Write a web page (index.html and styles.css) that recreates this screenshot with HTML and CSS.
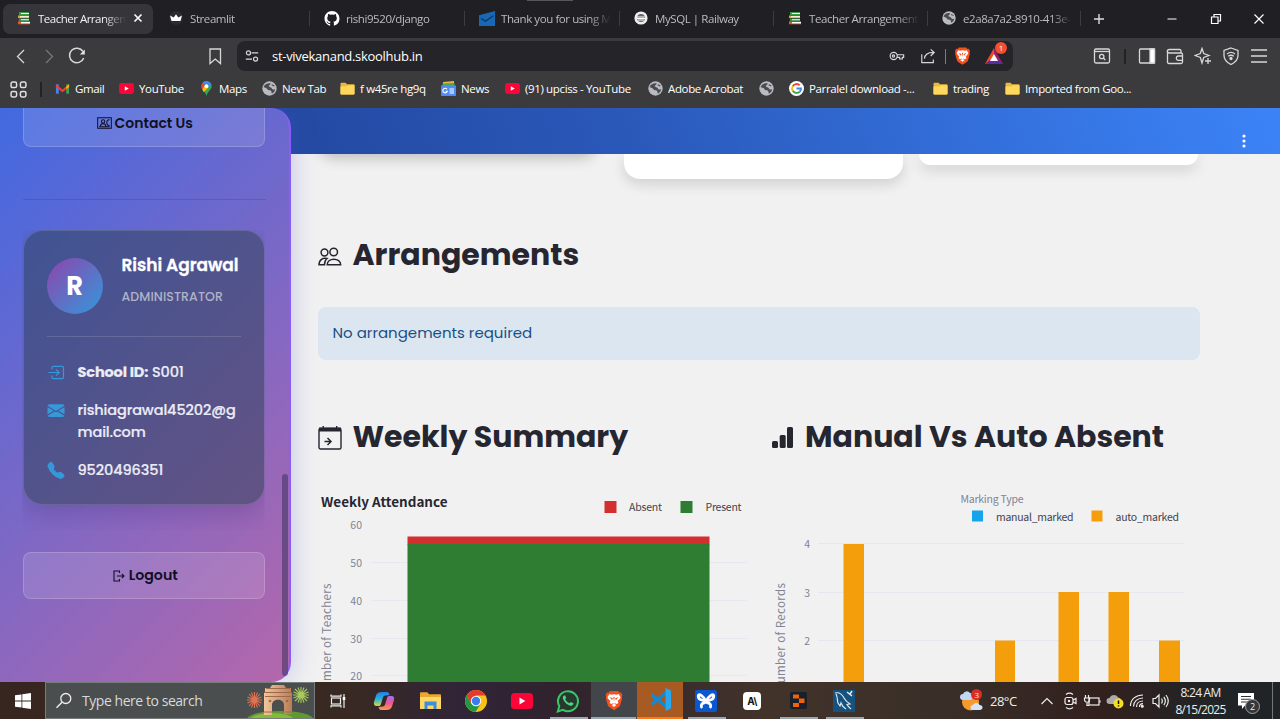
FILE: index.html
```html
<!DOCTYPE html>
<html lang="en">
<head>
<meta charset="utf-8">
<title>Teacher Arrangement</title>
<link rel="stylesheet" href="styles.css">
</head>
<body>
<svg class="defs" width="0" height="0">
  <defs>
    <linearGradient id="cop1" x1="0" y1="0" x2="0" y2="1"><stop offset="0" stop-color="#2a7bea"/><stop offset=".5" stop-color="#25b4d8"/><stop offset="1" stop-color="#e7cf3a"/></linearGradient>
    <linearGradient id="cop2" x1="0" y1="0" x2="0" y2="1"><stop offset="0" stop-color="#a66cf0"/><stop offset=".5" stop-color="#ee5593"/><stop offset="1" stop-color="#f69a4c"/></linearGradient>
    <linearGradient id="stone" x1="0" x2="1"><stop offset="0" stop-color="#f2c69b"/><stop offset="1" stop-color="#b87d58"/></linearGradient>
  </defs>
  <symbol id="books" viewBox="0 0 14 14"><path d="M2 1h10v3H2z" fill="#3c9b45"/><path d="M4 2h8v1H4z" fill="#fff"/><path d="M1 4.500h11v2.600H1z" fill="#e0a32c"/><path d="M3 5.200h9v1.100H3z" fill="#fff"/><path d="M2 7.500h10v2.500H2z" fill="#3c8c4c"/><path d="M4 8.200h8v1H4z" fill="#eee"/><path d="M1 10.300h12v3H1z" fill="#e2582d"/><path d="M4 11h9v1.400H4z" fill="#fff"/></symbol>
  <symbol id="globe" viewBox="0 0 14 14"><circle cx="7" cy="7" r="6.700" fill="#b9bbc0"/><path d="M1.500 5.500c1-2.500 3.500-3.700 6.500-3.300.3 1.600-1.700 1.500-1.600 2.800.1 1 2.200.7 2.700 1.800.6 1.200 1 1.400 3.200 1-.3 2-1.500 3.300-3 4-.8-.9.1-1.900-1-2.700-1.200-.8-2.700.1-3.200-1.300C4.500 6.300 3 6.500 1.500 5.500z" fill="#4a4b50"/><path d="M9 3.500c1 .2 1.500 1 2.600.9" stroke="#4a4b50" fill="none"/></symbol>
  <symbol id="folder" viewBox="0 0 15 14"><path d="M.5 2.500c0-.8.4-1.200 1.200-1.200h3.800L7 2.800h6.500c.7 0 1 .4 1 1V12c0 .7-.4 1-1 1h-12c-.7 0-1-.4-1-1z" fill="#e9b93a"/><path d="M.5 5l6-.2L8 3.800h6.500V12c0 .7-.4 1-1 1h-12c-.7 0-1-.4-1-1z" fill="#fed75c"/></symbol>
  <symbol id="yt" viewBox="0 0 22 16"><rect width="22" height="16" rx="3.500" fill="#fb0538"/><path d="M8.500 4.600v6.800l5.800-3.400z" fill="#fff"/></symbol>
  <symbol id="brave" viewBox="0 0 18 20"><path d="M5 .5h8l1.500 1.600 1.600-.1 1.300 2.700-.6 1.500.4 1.500-2.100 7.300c-.4 1.200-3 2.900-6.100 4.700-3.100-1.800-5.700-3.500-6.100-4.700L.8 7.700l.4-1.500L.6 4.700 1.900 2l1.600.1z" fill="#f4501e"/><path d="M4.500 3.600l2.100.6 2.400-.5 2.400.5 2.100-.6 2 2.900-.4 1.400-2.400 2.700.7 1.900-1.700 1.100-1.700-.8-1 .8-1-.8-1.700.8-1.700-1.100.7-1.900-2.400-2.700-.4-1.400zM6.500 14.500L9 13.200l2.500 1.300L9 16.500z" fill="#fff"/><path d="M4.500 6.600l3.300 1.100-.6 2.100zm9 0l-3.300 1.100.6 2.100zM8.300 6.500h1.400L9 11z" fill="#f4501e"/></symbol>
</svg>

<header class="browser">
  <nav class="tabs">
    <div class="tab active"><svg class="fav"><use href="#books"/></svg><span class="label">Teacher Arrangem</span><svg class="close" viewBox="0 0 10 10"><path d="M1.500 1.500l7 7m0-7l-7 7" stroke="#fff" stroke-width="1.600"/></svg></div>
    <div class="tab"><svg class="fav" viewBox="0 0 14 14"><circle cx="7" cy="7" r="7" fill="#2b2b31"/><path d="M1 4.500l3.700 1.900L7 3.200l2.300 3.200L13 4.500 11.500 10h-9z" fill="#fff"/></svg><span class="label">Streamlit</span></div>
    <div class="tab"><svg class="fav big" viewBox="0 0 16 16"><path fill="#fff" d="M8 0C3.580 0 0 3.580 0 8c0 3.540 2.290 6.530 5.470 7.590.4.070.55-.17.55-.38v-1.490c-2.010.37-2.530-.49-2.690-.94-.09-.23-.48-.94-.82-1.130-.28-.15-.68-.52-.01-.53.63-.01 1.080.58 1.230.82.72 1.210 1.870.87 2.330.66.070-.52.28-.87.51-1.070-1.780-.2-3.640-.89-3.640-3.950 0-.87.31-1.590.82-2.150-.08-.2-.36-1.020.08-2.120 0 0 .67-.21 2.200.82a7.500 7.500 0 0 1 4 0c1.530-1.040 2.200-.82 2.200-.82.44 1.100.16 1.920.08 2.120.51.56.82 1.270.82 2.150 0 3.070-1.870 3.750-3.650 3.950.29.25.54.73.54 1.480v2.200c0 .21.15.46.55.38A8 8 0 0 0 16 8c0-4.420-3.580-8-8-8z"/></svg><span class="label">rishi9520/django</span></div>
    <div class="tab"><svg class="fav big" viewBox="0 0 15 14"><path d="M0 4L15 0v14H0z" fill="#1769b5"/><path d="M2 7l4 2.500 7.500-5" stroke="#11345e" fill="none" stroke-width="1.200"/></svg><span class="label">Thank you for using M</span></div>
    <div class="tab"><svg class="fav" viewBox="0 0 14 14"><circle cx="7" cy="7" r="6.600" fill="#eee"/><circle cx="7" cy="7" r="3.900" fill="#666"/><path d="M2.500 6h8M3 7.500h8M4 9h6" stroke="#fff"/></svg><span class="label">MySQL | Railway</span></div>
    <div class="tab"><svg class="fav"><use href="#books"/></svg><span class="label">Teacher Arrangement</span></div>
    <div class="tab"><svg class="fav"><use href="#globe"/></svg><span class="label">e2a8a7a2-8910-413e-</span></div>
    <svg class="winbtn" viewBox="0 0 12 12"><path d="M1 6h10M6 1v10" stroke="#ddd" stroke-width="1.400"/></svg>
    <span></span>
    <svg class="winbtn" viewBox="0 0 12 12"><path d="M1.500 6h9" stroke="#fff"/></svg>
    <svg class="winbtn" viewBox="0 0 12 12"><path d="M1.500 4h6.500v6.500H1.500zM4 4V1.500h6.500V8H8" fill="none" stroke="#fff" stroke-width="1.200"/></svg>
    <svg class="winbtn" viewBox="0 0 12 12"><path d="M1.500 1.500l9 9m0-9l-9 9" stroke="#fff" stroke-width="1.200"/></svg>
    <i class="top-mark"></i>
  </nav>
  <div class="toolbar">
    <svg viewBox="0 0 18 18"><path d="M12 3L5.500 9.500 12 16"/></svg>
    <svg class="dim" viewBox="0 0 18 18"><path d="M6 3l6.500 6.500L6 16"/></svg>
    <svg viewBox="0 0 18 18"><path d="M15 4.500A7.300 7.300 0 1 0 15.700 11" stroke-width="1.500"/><path d="M16.800 2.500v5h-5z" fill="#e4e4e6" stroke="none"/></svg>
    <span></span>
    <svg viewBox="0 0 18 18"><path d="M4 2h10.500v14.500L9.200 12 4 16.500z" stroke-width="1.300"/></svg>
    <div class="address">
      <svg viewBox="0 0 18 18"><circle cx="5" cy="5.500" r="2.300"/><path d="M8.500 5.500H16M2 12.500h7"/><circle cx="13" cy="12.500" r="2.300"/></svg>
      <span class="url">st-vivekanand.skoolhub.in</span>
      <svg viewBox="0 0 18 18"><circle cx="5.300" cy="9" r="4"/><circle cx="5" cy="9" r="1.300"/><path d="M9 7.600h7.500v3H15v1.800h-3v-1.800H9"/></svg>
      <svg viewBox="0 0 18 18"><path d="M2 7v9.500h13V13M5 12c.5-5 4-7 10-7M12 1.500L16 5l-4 4"/></svg>
      <i class="rule light"></i>
      <svg class="logo"><use href="#brave"/></svg>
      <span class="bat"><svg viewBox="0 0 18 16"><path d="M9 0L0 16h5l4-7z" fill="#f04b28"/><path d="M9 0l9 16h-4L9 9z" fill="#9e1f63"/><path d="M0 16l5-4h9l4 4z" fill="#5d2ba0"/><path d="M9 6l4 7H5z" fill="#fff"/></svg><b>1</b></span>
    </div>
    <span></span>
    <svg viewBox="0 0 18 18"><rect x="1.500" y="2" width="15" height="14" rx="1.500"/><path d="M2 4.500h14"/><circle cx="8.700" cy="9.500" r="2.200"/><path d="M10.300 11l2 2"/></svg>
    <i class="rule"></i>
    <svg viewBox="0 0 18 18"><rect x="1.500" y="2" width="15" height="14" rx="1"/><path d="M12 2h4.500v14H12z" fill="#fff"/></svg>
    <svg viewBox="0 0 18 18"><path d="M15 6V4c0-1-.5-1.500-1.500-1.500h-10c-3 0-3 3.500 0 3.500H15c1 0 1.500.5 1.500 1.500V15c0 1-.5 1.500-1.500 1.500H3c-1 0-1.500-.5-1.500-1.500V4M16 9h-4a2.200 2.200 0 0 0 0 4.300h4"/></svg>
    <svg viewBox="0 0 18 18"><path d="M8 1.500l1.700 5 5.300 2-5.300 2L8 16l-1.700-5.500L1 8.500l5.300-2zM14 11v6M11 14h6"/></svg>
    <svg viewBox="0 0 18 18"><path d="M9 1l7 2.500v5c0 4-3 7-7 9-4-2-7-5-7-9v-5zM5 7c2.500-2 5.500-2 8 0M6.200 9.300c2-1.500 3.600-1.500 5.600 0"/><circle cx="9" cy="11.500" r="1" fill="#fff"/></svg>
    <svg viewBox="0 0 18 18"><path d="M1 3h16M1 9h16M1 15h16"/></svg>
  </div>
  <nav class="bookmarks">
    <svg class="apps" viewBox="0 0 16 16"><g fill="none" stroke="#e0e0e2" stroke-width="1.400"><rect x="1" y="1" width="5.200" height="5.200" rx="1.500"/><rect x="9.800" y="1" width="5.200" height="5.200" rx="1.500"/><rect x="1" y="9.800" width="5.200" height="5.200" rx="1.500"/><rect x="9.800" y="9.800" width="5.200" height="5.200" rx="1.500"/></g></svg>
    <i class="rule"></i>
    <a><svg viewBox="0 0 16 14"><path d="M1 2.500h3V12.500H1z" fill="#4285f4"/><path d="M12 2.500h3v10h-3z" fill="#34a853"/><path d="M1 2.500L8 8l7-5.500v3L8 11 1 5.500z" fill="#ea4335"/><path d="M12 5l3-2.500v3l-3 2z" fill="#fbbc04"/></svg>Gmail</a>
    <a><svg><use href="#yt"/></svg>YouTube</a>
    <a><svg viewBox="0 0 14 16"><path d="M7 0a5.500 5.500 0 0 0-5.500 5.500C1.500 9 5.500 10.500 7 16c1.500-5.500 5.500-7 5.500-10.500A5.500 5.500 0 0 0 7 0z" fill="#34a853"/><path d="M2.800 2A5.500 5.500 0 0 1 9 .4L4.500 6z" fill="#4285f4"/><path d="M2.800 2L6 4.800 2.500 8.600C1.200 6 1.200 4 2.800 2z" fill="#ea4335"/><path d="M6 4l3 3-5 5-1.500-3.400z" fill="#fbbc04"/><path d="M9 .4a5.500 5.500 0 0 1 3.200 3L8 7z" fill="#4285f4"/><circle cx="7" cy="5.500" r="2" fill="#fff"/></svg>Maps</a>
    <a><svg><use href="#globe"/></svg>New Tab</a>
    <a><svg><use href="#folder"/></svg>f w45re hg9q</a>
    <a><svg viewBox="0 0 15 15"><path d="M2 1l11-1v4H2z" fill="#e6b93a"/><path d="M1.500 2.500l12-.5v4h-12z" fill="#4ca65b"/><path d="M0 4.500h15V14c0 .6-.4 1-1 1H1c-.6 0-1-.4-1-1z" fill="#4f8df5"/><path d="M6 8.300a2.300 2.300 0 1 0 .3 2H4.500M8.500 8H13M8.500 10H13M8.500 12H13" stroke="#fff" stroke-width="1.100" fill="none"/></svg>News</a>
    <a><svg><use href="#yt"/></svg>(91) upciss - YouTube</a>
    <a><svg><use href="#globe"/></svg>Adobe Acrobat</a>
    <a><svg><use href="#globe"/></svg></a>
    <a><svg viewBox="0 0 16 16"><circle cx="8" cy="8" r="8" fill="#fff"/><g fill="none" stroke-width="2"><path d="M11.400 4.600A4.800 4.800 0 0 0 4 5.500" stroke="#ea4335"/><path d="M4 5.500a4.800 4.800 0 0 0 0 5" stroke="#fbbc05"/><path d="M4 10.500a4.800 4.800 0 0 0 7.300 1" stroke="#34a853"/><path d="M11.300 11.500A4.700 4.700 0 0 0 12.800 8H8" stroke="#4285f4"/></g></svg>Parralel download -...</a>
    <a><svg><use href="#folder"/></svg>trading</a>
    <a><svg><use href="#folder"/></svg>Imported from Goo...</a>
  </nav>
</header>

<div class="page">
  <aside class="sidebar">
    <div class="side-btn contact"><svg width="15" height="12" viewBox="0 0 16 13"><g fill="none" stroke="currentColor" stroke-width="1.100"><rect x=".6" y=".8" width="14.800" height="11.400"/><path d="M2.300 10.500h11.400M3.500 10c0-3.500 6-3.500 6 0"/><circle cx="6.500" cy="4.900" r="1.800"/><path d="M13.500 3c-2-.3-3 1-3 3s1 3.500 3 3"/></g></svg>Contact Us</div>
    <hr class="side-rule">
    <section class="profile">
      <div class="profile-top">
        <div class="avatar">R</div>
        <div><div class="name">Rishi Agrawal</div><div class="role">ADMINISTRATOR</div></div>
      </div>
      <ul class="facts">
        <li><svg viewBox="0 0 18 16"><path d="M5 5V3c0-.8.400-1.200 1.200-1.200h9c.8 0 1.300.4 1.300 1.200v10c0 .8-.5 1.200-1.300 1.200h-9c-.8 0-1.200-.4-1.200-1.200v-2M1.500 8H12M9 4.800L12.200 8 9 11.200" fill="none" stroke="#3498db" stroke-width="1.200"/></svg><span><b>School ID:</b> S001</span></li>
        <li><svg viewBox="0 0 16 16"><path fill="#3498db" d="M.05 3.555A2 2 0 0 1 2 2h12a2 2 0 0 1 1.950 1.555L8 8.414zM0 4.697v7.104l5.803-3.558zM6.761 8.830l-6.570 4.027A2 2 0 0 0 2 14h12a2 2 0 0 0 1.808-1.144l-6.570-4.027L8 9.586zm3.436-.586L16 11.801V4.697z"/></svg><span class="mail">rishiagrawal45202@g<br>mail.com</span></li>
        <li><svg viewBox="0 0 16 16"><path fill="#3498db" fill-rule="evenodd" d="M1.885.511a1.745 1.745 0 0 1 2.610.163L6.290 2.980c.329.423.445.974.315 1.494l-.547 2.190a.68.68 0 0 0 .178.643l2.457 2.457a.68.68 0 0 0 .644.178l2.189-.547a1.750 1.750 0 0 1 1.494.315l2.306 1.794c.829.645.905 1.870.163 2.611l-1.034 1.034c-.74.740-1.846 1.065-2.877.702a18.600 18.600 0 0 1-7.010-4.420 18.600 18.600 0 0 1-4.420-7.009c-.362-1.030-.037-2.137.703-2.877z"/></svg><span class="phone">9520496351</span></li>
      </ul>
    </section>
    <div class="side-btn logout"><svg width="12" height="12" viewBox="0 0 12 12"><path d="M6.500 3V1H1v10h5.500V9M4 6h7M8.800 3.800L11 6 8.800 8.200" fill="none" stroke="currentColor" stroke-width="1.100"/></svg>Logout</div>
    <i class="thumb"></i>
  </aside>

  <main class="content">
    <div class="topbar"><svg width="6" height="14" viewBox="0 0 6 14"><g fill="#fff"><circle cx="3" cy="2" r="1.600"/><circle cx="3" cy="7" r="1.600"/><circle cx="3" cy="12" r="1.600"/></g></svg></div>
    <div class="cards"><div class="card one"></div><div class="card two"></div><div class="card three"></div></div>
    <h2 class="h-arr"><svg viewBox="0 0 24 20"><g fill="none" stroke="currentColor" stroke-width="1.500"><circle cx="15.700" cy="5" r="3.800"/><circle cx="6.500" cy="5.500" r="3.400"/><path d="M9.200 17.800c0-7.500 13.500-7.500 13.500 0z"/><path d="M9 11.500c-4-.8-8 .8-8 6.300h5.500c0-3 .8-5 2.500-6.300z"/></g></svg><span>Arrangements</span></h2>
    <div class="notice">No arrangements required</div>
    <div class="charts">
      <section>
        <h2 class="h-week"><svg viewBox="0 0 24 24"><rect x="1" y="2.500" width="22" height="20.500" rx="1.500" fill="none" stroke="currentColor" stroke-width="1.400"/><path d="M1 1.500h22V5.500H1zM4.500 0h1.400v3H4.500zM18 0h1.400v3H18z" fill="currentColor"/><path d="M6.500 15.500h6.500M9.500 12l3.500 3.500-3.500 3.500" fill="none" stroke="currentColor" stroke-width="1.500"/></svg><span>Weekly Summary</span></h2>
        <svg class="chart" width="432" height="202" viewBox="318 480 432 202">
          <text class="ct" x="321" y="507" textLength="126.500" lengthAdjust="spacingAndGlyphs">Weekly Attendance</text>
          <rect x="604.500" y="501" width="12" height="12" fill="#d32f2f"/><text class="lg" x="629" y="511.300" textLength="33">Absent</text>
          <rect x="680.500" y="501" width="12" height="12" fill="#2e7d32"/><text class="lg" x="705.500" y="511.300" textLength="36">Present</text>
          <path class="grid" d="M371 562.500H747M371 600.500H747M371 638.500H747M371 675.500H747"/>
          <g class="ax"><text x="362" y="529">60</text><text x="362" y="567">50</text><text x="362" y="605">40</text><text x="362" y="642.500">30</text><text x="362" y="680">20</text></g>
          <rect x="407.500" y="536.500" width="302" height="8" fill="#d32f2f"/><rect x="407.500" y="544" width="302" height="138" fill="#2e7d32"/>
          <text class="yt" transform="translate(330.500 697) rotate(-90)" textLength="113.500">Number of Teachers</text>
        </svg>
      </section>
      <section>
        <h2 class="h-man"><svg viewBox="0 0 22 22"><g fill="currentColor"><rect x="0" y="14" width="6" height="7" rx="1.500"/><rect x="7.700" y="8" width="6" height="13" rx="1.500"/><rect x="15" y="0" width="6" height="21" rx="1.500"/></g></svg><span>Manual Vs Auto Absent</span></h2>
        <svg class="chart" width="432" height="202" viewBox="771 480 432 202">
          <text class="lt" x="960.500" y="503" textLength="63">Marking Type</text>
          <rect x="972" y="510.500" width="11" height="11" fill="#16a5ea"/><text class="lg" x="996" y="521" textLength="77.500">manual_marked</text>
          <rect x="1091.500" y="510.500" width="11" height="11" fill="#f59e0b"/><text class="lg" x="1115.500" y="521" textLength="63.500">auto_marked</text>
          <path class="grid" d="M818 543.500h366M818 592.500h366M818 640.500h366"/>
          <g class="ax"><text x="810" y="548">4</text><text x="810" y="596.500">3</text><text x="810" y="644.500">2</text></g>
          <g fill="#f59e0b"><rect x="843.500" y="544" width="20.500" height="138"/><rect x="995" y="640.500" width="20" height="42"/><rect x="1058.500" y="592" width="20.500" height="90"/><rect x="1108.500" y="592" width="20.500" height="90"/><rect x="1159" y="640.500" width="21" height="42"/></g>
          <text class="yt" transform="translate(784.500 692) rotate(-90)" textLength="109">Number of Records</text>
        </svg>
      </section>
    </div>
  </main>
</div>

<footer class="taskbar">
  <span class="cell start"><svg width="16" height="16" viewBox="0 0 16 16"><path fill="#fff" d="M0 2.300L6.500 1.400v6.200H0zM7.300 1.300L16 0v7.600H7.300zM0 8.400h6.500v6.200L0 13.700zM7.300 8.400H16V16l-8.700-1.300z"/></svg></span>
  <div class="search">
    <svg width="18" height="18" viewBox="0 0 18 18"><circle cx="10.800" cy="6.500" r="5" fill="none" stroke="#eee" stroke-width="1.300"/><path d="M7 10.300L1.500 15.800" stroke="#eee" stroke-width="1.400"/></svg>
    <span>Type here to search</span>
    <svg class="gate" width="68" height="36" viewBox="0 0 68 36">
      <ellipse cx="34" cy="36" rx="33" ry="8" fill="#5f9a2e"/><ellipse cx="26" cy="37" rx="22" ry="7" fill="#86b83a"/>
      <g stroke="#df7251" stroke-width="1.100"><path d="M1 17h15M8.500 9v16M3 11l11 12M14 11L3 23M1.500 14l14 6M15.500 14l-14 6M5.500 9.500l6 15M11.500 9.500l-6 15"/></g>
      <g stroke="#a9c95a" stroke-width="1.100"><path d="M47 12h16M55 4v16M49 6l12 12M61 6L49 18M47.500 9l15 6M62.500 9l-15 6M52 4.500l6 15M58 4.500l-6 15"/></g>
      <path d="M26 2h12l2 3h5v4h1v4H18V9h1V5h5zM18 13h28v18H38V22c0-7-12-7-12 0v10H18z" fill="url(#stone)"/><path d="M18 9.500h28M20 5.500h24M19 13.500h26M18 29h8M38 29h8" stroke="#9c694a" stroke-width="1"/><circle cx="24" cy="18" r="1.300" fill="#9c694a"/><circle cx="41" cy="18" r="1.300" fill="#9c694a"/>
    </svg>
  </div>
  <span class="cell"><svg width="16" height="16" viewBox="0 0 16 16"><g fill="none" stroke="#eee" stroke-width="1.200"><rect x="1.500" y="5" width="9" height="6"/><path d="M1 1.500v1.700h10V1.500M1 14.500v-1.700h10v1.700M14 1v14"/></g><rect x="12.700" y="4" width="2.600" height="3" fill="#fff"/></svg></span>
  <span class="cell"><svg width="22" height="20" viewBox="0 0 22 20"><path d="M9 1h5c1.500 0 2 1 2.500 3l-4 .5c-2 0-2.500 1.500-3 3.500L8 13c-.5 1.500-1 2-2.500 2H3.500C1 15 .5 13 1 11l2-6.500C4 2 5.500 1 9 1z" fill="url(#cop1)"/><path d="M13 19H8c-1.500 0-2-1-2.500-3l4-.5c2 0 2.500-1.500 3-3.500L14 7c.5-1.500 1-2 2.500-2h2c2.500 0 3 2 2.500 4l-2 6.500C18 18 16.500 19 13 19z" fill="url(#cop2)"/></svg></span>
  <span class="cell"><svg width="21" height="18" viewBox="0 0 21 18"><path d="M0 1.500C0 .7.400.3 1.200.3h6l2 2H20c.6 0 1 .4 1 1V17H0z" fill="#e8a92d"/><path d="M0 5h21v12H0z" fill="#ffd768"/><path d="M4.500 17V9.500h12V17h-3v-3.500h-6V17z" fill="#3d8fdb"/></svg></span>
  <span class="cell"><svg width="22" height="22" viewBox="0 0 22 22"><circle cx="11" cy="11" r="11" fill="#fbc116"/><path d="M1.500 5.500A11 11 0 0 1 20.500 5.500H11L6.200 13.800z" fill="#e33b2e"/><path d="M1.500 5.500A11 11 0 0 0 10.500 22l5.300-8.500-9.500.2z" fill="#229847"/><circle cx="11" cy="11" r="5.200" fill="#fff"/><circle cx="11" cy="11" r="4.200" fill="#3b7ded"/></svg></span>
  <span class="cell"><svg width="22" height="16"><use href="#yt"/></svg></span>
  <span class="cell running"><svg width="24" height="24" viewBox="0 0 24 24"><path d="M1.800 22.500l1.500-5.300a10 10 0 1 1 3.700 3.700z" fill="#27382f" stroke="#35c768" stroke-width="2"/><path d="M8 6.500c-1.500 1-1.500 2.700-.5 4.500 1.700 3 3.700 4.800 6.500 5.700 1.700.5 3.500-.8 3.500-2.500L14.700 13l-1.200 1.300c-2-.8-3.300-2-4.300-4l1-1.200-1-2.600z" fill="#4ed47c"/></svg></span>
  <span class="cell focus"><svg width="18" height="21"><use href="#brave"/></svg></span>
  <span class="cell code"><svg width="23" height="23" viewBox="0 0 23 23"><path d="M2.500 6.500L17 18.500M2.500 16.500L17 4.500" stroke="#1489d3" stroke-width="3.500"/><path d="M16.500 0L22 2.500v18L16.500 23z" fill="#28a8ee"/></svg></span>
  <span class="cell running"><svg width="22" height="22" viewBox="0 0 22 22"><rect width="22" height="22" rx="2" fill="#0b57d0"/><g fill="none" stroke="#fff" stroke-width="2.800" stroke-linejoin="round"><path d="M10.300 10.500C8 5.500 4 3.500 3.300 5.500 3 9 6 10.500 10.300 10.500zM11.700 10.500C14 5.500 18 3.500 18.700 5.500 19 9 16 10.500 11.700 10.500z"/><path d="M10 12.500c-3 .5-4.300 2.500-3.500 4.500M12 12.500c3 .5 4.300 2.500 3.500 4.500" stroke-linecap="round"/></g></svg></span>
  <span class="cell"><b class="ai">A\</b></span>
  <span class="cell running"><svg width="17" height="17" viewBox="0 0 17 17"><rect width="17" height="17" rx="2" fill="#17202b"/><path d="M3 2.500h6v4H3zM3 11h6v4H3zM9 6.500h5.500v4.500H9z" fill="#f26207"/></svg></span>
  <span class="cell running"><svg width="22" height="22" viewBox="0 0 22 22"><rect width="22" height="22" fill="#15527e"/><path d="M2 3c4-1 7 1 9 5 1.500 3 3 4 6 6l-3 .5c1 2 2 3 4 4.500M3 4c2 4 1 6 2 9l2 3 1-3c1 3 2 4 5 6" stroke="#dce8ef" stroke-width="1.200" fill="none"/><path d="M14 2l5 4M19 1l-2 3" stroke="#e8eef2" stroke-width="1.500"/></svg></span>
  <div class="weather"><span class="wicon"><svg width="23" height="22" viewBox="0 0 23 22"><circle cx="10.500" cy="12" r="8.500" fill="#f49a2e"/><path d="M3 10a3 3 0 0 1 0-6 4 4 0 0 1 7-1c3 0 4 7 0 7z" fill="#c2d7f4"/><path d="M13 20a2.500 2.500 0 0 1 0-5c2-3 6-2 6.500 0 4 0 4 5 0 5z" fill="#d5e3f8"/></svg><b>3</b></span><span>28°C</span></div>
  <div class="tray">
    <svg viewBox="0 0 18 18"><path d="M3.500 12l5.500-5.500 5.500 5.500"/></svg>
    <svg viewBox="0 0 18 18"><rect x="4" y="5.500" width="8" height="7" rx="2"/><path d="M12 8l3-1.500v5L12 10M5 2.500c2-1.500 5-1.500 7 0M5 15.500c2 1.500 5 1.500 7 0"/><circle cx="8" cy="9" r=".6"/></svg>
    <svg viewBox="0 0 18 18"><rect x="6" y="6" width="10" height="7"/><path d="M17 8.500v2M2.500 3v3M5.500 3v3M1.500 6h5v2c0 3-4.500 3-5 0zM4 11v2.500h2"/></svg>
    <svg viewBox="0 0 18 18"><path d="M3.500 12a3 3 0 0 1 0-6C5 2.500 10 2 12 5.500c3 0 4 4 1 6.500z" fill="#aaa" stroke="none"/><circle cx="12.500" cy="11.500" r="5" fill="#f8df22" stroke="none"/><path d="M12.500 8.500v3.500M12.500 13.300v1.200" stroke="#111" stroke-width="1.500"/></svg>
    <svg viewBox="0 0 18 18"><path d="M2.500 14C2.500 7 8 3 15 3M5.500 14.500c0-5 4-8.500 9.500-8.500M8.500 15c0-3.500 2.500-6 6.500-6M11.500 15c0-2 1.500-3.300 3.500-3.300"/><circle cx="14.300" cy="14.300" r=".9" fill="#fff"/></svg>
    <svg viewBox="0 0 18 18"><path d="M2 6.500h2.500L8 3v12l-3.500-3.500H2zM10.500 6.500c1 1.500 1 3.500 0 5M12.800 4.800c2 2.700 2 5.700 0 8.400M15 3c3 4 3 8 0 12"/></svg>
  </div>
  <div class="clock"><span>8:24 AM</span><span>8/15/2025</span></div>
  <div class="notif"><svg width="16" height="16" viewBox="0 0 16 16"><path d="M0 0h16v12.500H7L4 16v-3.500H0z" fill="#fff"/><path d="M3 3.500h10M3 6.200h10M3 9h7" stroke="#333" stroke-width="1.100"/></svg><b>2</b></div>
</footer>
</body>
</html>
```
FILE: styles.css
```css
* { box-sizing: border-box; }
body { margin: 0; width: 1280px; height: 719px; overflow: hidden; display: flex; flex-direction: column; background: #f1f1f2; font-family: "Open Sans", "Noto Sans", sans-serif; }
.defs { position: absolute; }
i { display: block; }

/* Browser chrome */
.browser { height: 108px; background: #3b3b3e; color: #fff; flex: none; }
.tabs { position: relative; height: 38px; background: #1f1f24; display: grid; grid-template-columns: 152px 155px 155px 155px 154px 154px 153px 36px 32px 45px 43px 43px; padding: 0 0 0 3px; align-items: center; }
.tab { height: 30px; display: flex; align-items: center; padding: 0 0 2px 14px; gap: 7px; font-size: 11.5px; letter-spacing: -.42px; color: #bcbcbf; position: relative; }
.tab + .tab::after { content: ""; position: absolute; right: 0; top: 7px; width: 1px; height: 15px; background: #3c3c41; }
.tab.active { background: #35353a; border-radius: 7px; width: 150px; color: #f2f2f4; letter-spacing: -.5px; }
.tab .fav { width: 14px; height: 14px; flex: none; }
.tab .fav.big { width: 16px; height: 15px; margin-right: -1px; }
.tab .label { width: 112px; overflow: hidden; white-space: nowrap; mask-image: linear-gradient(90deg, #000 88px, transparent 110px); }
.tab.active .label { width: 94px; margin-right: -6px; mask-image: linear-gradient(90deg, #000 66px, transparent 88px); }
.tab .close { width: 10px; height: 10px; flex: none; }
.winbtn { width: 12px; height: 12px; justify-self: center; }
.top-mark { position: absolute; left: 527px; top: 0; width: 46px; height: 1px; background: #55585b; }
.toolbar { height: 36px; padding-left: 7px; display: grid; grid-template-columns: 28px 28px 28px 110px 28px 788px 71px 28px 17px 28px 28px 28px 28px 28px; align-items: center; justify-items: center; }
.toolbar svg { width: 18px; height: 18px; fill: none; stroke: #d8d8da; stroke-width: 1.300; }
.toolbar svg.dim { stroke: #77777a; }
.address { width: 776px; height: 30px; justify-self: start; margin-left: 8px; background: #242429; border-radius: 8px; display: grid; grid-template-columns: 30px 615px 30px 32px 2px 32px 32px; align-items: center; justify-items: center; }
.address > svg { width: 16px; height: 16px; }
.address .url { justify-self: start; padding-left: 5px; font-size: 13px; letter-spacing: -.29px; }
.address .logo { width: 17px; height: 18px; stroke: none; }
.rule { width: 2px; height: 15px; background: #222226; }
.rule.light { width: 1px; background: #7c7c80; }
.bat { position: relative; height: 16px; }
.bat svg { width: 18px; height: 16px; stroke: none; display: block; }
.bat b { position: absolute; left: 10px; top: -6px; width: 12px; height: 12px; border-radius: 50%; background: #f4502f; font: 8px/12px "Open Sans", sans-serif; text-align: center; }
.bookmarks { height: 30px; padding: 0 0 0 10px; display: grid; grid-template-columns: 30px 15px 64px 80px 63px 78px 101px 64px 143px 111px 30px 144px 72px 140px; align-items: center; font-size: 11.500px; letter-spacing: -.36px; }
.bookmarks a { display: flex; gap: 5px; height: 20px; margin-bottom: 2px; align-items: center; white-space: nowrap; }
.bookmarks a svg { width: 15px; height: 15px; flex: none; }
.bookmarks .apps { width: 17px; height: 17px; }

/* Application */
.page { height: 574px; display: flex; overflow: hidden; background: #f1f1f2; font-family: Poppins, Inter, sans-serif; position: relative; }
.sidebar { position: relative; z-index: 2; width: 290.500px; height: 574px; flex: none; padding: 0 24px 0 22.500px; border-right: 2px solid #8b5cf6; border-radius: 0 20px 20px 0; background: linear-gradient(135deg, #4169e1, #b567ab); box-shadow: 2px 0 24px rgba(80, 90, 200, .25); }
.side-btn { width: 242.500px; height: 47px; border: 1px solid rgba(255,255,255,.18); border-radius: 8px; background: rgba(255,255,255,.12); color: #101024; display: flex; align-items: center; justify-content: center; font-size: 14px; font-weight: 600; gap: 4px; }
.contact { height: 39px; border-top: 0; border-radius: 0 0 8px 8px; padding: 0 0 8px 2px; gap: 3px; }
.side-rule { width: 243px; margin: 52px 0 30px; border: 0; border-top: 1px solid rgba(50,50,120,.25); }
.profile { width: 242px; height: 275px; border: 1px solid rgba(255,255,255,.12); border-radius: 20px; background: rgba(44,62,80,.5); padding: 23px; box-shadow: 0 8px 24px rgba(40,20,80,.2); color: #ebebf6; clip-path: inset(0 0 -25px 0); }
.profile-top { height: 83px; border-bottom: 1px solid rgba(255,255,255,.14); display: flex; gap: 19px; }
.avatar { width: 56px; height: 56px; margin-top: 4px; border-radius: 50%; background: linear-gradient(135deg, #8e44ad, #3498db); font-size: 25.500px; font-weight: 700; display: flex; align-items: center; justify-content: center; color: #fff; }
.name { font-size: 17px; font-weight: 600; line-height: 23px; letter-spacing: -.05px; white-space: nowrap; color: #fff; -webkit-text-stroke: .3px #fff; }
.role { margin-top: 10px; font-size: 12.500px; line-height: 20px; font-weight: 500; color: #b0b3c7; letter-spacing: .1px; }
.facts { list-style: none; padding: 0; margin: 24px 0 0; font-size: 14.500px; line-height: 22px; font-weight: 500; letter-spacing: -.12px; -webkit-text-stroke: .2px #ebebf6; }
.facts li { display: flex; gap: 13px; margin-bottom: 16px; white-space: nowrap; }
.facts li svg { width: 18px; height: 17px; margin-top: 3px; flex: none; }
.facts b { font-weight: 700; letter-spacing: -.15px; }
.phone { letter-spacing: -.12px; }
.logout { margin-top: 47px; padding-left: 3px; font-size: 14.200px; }
.thumb { position: absolute; right: 1px; top: 366px; width: 6px; height: 202px; border-radius: 3px; background: rgba(66,55,100,.6); }
.content { width: 989.500px; position: relative; }
.topbar { position: relative; z-index: 1; margin-left: -25px; height: 46px; background: linear-gradient(68deg, #2348a0, #2a58b9 35%, #3b82f6 98%); padding: 26px 33px 0 0; display: flex; justify-content: flex-end; }
.cards { height: 80px; margin-left: 27px; display: grid; grid-template-columns: 306px 295px 279px; align-items: start; }
.card { width: 279px; background: #fff; border-radius: 0 0 16px 16px; box-shadow: 0 5px 14px rgba(0,0,0,.14); }
.one { height: 22px; margin-top: -23px; box-shadow: 0 5px 14px rgba(0,0,0,.22); }
.two { height: 25px; }
.three { height: 11px; }
h2 { margin: 0; height: 42px; display: flex; align-items: flex-start; gap: 11px; color: #262631; font-size: 30px; line-height: 42px; font-weight: 700; white-space: nowrap; }
h2 svg { width: 24px; height: 24px; flex: none; }
.h-arr { margin-left: 27px; }
.h-arr svg { width: 24px; height: 20px; margin-top: 13px; }
.notice { width: 882px; height: 53px; margin: 31px 0 0 27px; border-radius: 8px; background: #dce6f0; color: #185086; padding-left: 15px; font-size: 15px; line-height: 52px; }
.charts { margin: 56px 0 0 27px; display: grid; grid-template-columns: 453px 453px; }
.charts section { height: 300px; }
.h-week svg { margin-top: 10px; }
.h-man { padding-left: .5px; }
.h-man svg { width: 22px; height: 22px; margin: 11px 0 0 1px; }
.chart { display: block; margin-top: 22px; font-family: "Noto Sans CJK JP", "Noto Sans", sans-serif; }
.ct { font-size: 13px; font-weight: 700; fill: #262631; }
.lg { font-size: 10.500px; fill: #43444d; }
.lt { font-size: 10.500px; fill: #808495; }
.ax text { font-size: 10.500px; fill: #808495; text-anchor: end; }
.yt { font-size: 11.500px; fill: #808495; }
.grid { stroke: #e6e8ef; fill: none; }

/* Taskbar */
.taskbar { height: 37px; flex: none; color: #eee; background: linear-gradient(90deg, #36261f 0%, #382923 28%, #302438 36%, #30232d 44%, #42332a 60%, #392f28 74%, #32201e 86%, #202426 95%, #202327 100%); display: grid; grid-template-columns: 45px 270px repeat(12, 46px) 93px 76px 136px 63px 41px; font-size: 11.500px; letter-spacing: -.2px; }
.cell { display: flex; align-items: center; justify-content: center; position: relative; }
.running::after, .focus::after { content: ""; position: absolute; bottom: 0; left: 5px; width: 38px; height: 2px; background: #9ca6af; }
.focus { background: #42454a; }
.focus::after { left: 0; width: 45px; }
.code { background: #a75a22; border-bottom: 2px solid #ff7816; }
.ai { width: 18px; height: 18px; border-radius: 4px; background: #fff; color: #111; font: 700 10px/18px Inter, sans-serif; letter-spacing: -.5px; text-align: center; }
.search { border: 1px solid #777b7c; background: #4a4e4f; display: flex; align-items: center; padding-left: 9px; overflow: hidden; font-size: 14px; letter-spacing: -.45px; color: #d8d9d9; }
.search span { margin-left: 9px; white-space: nowrap; }
.search .gate { margin-left: auto; }
.weather { grid-column: 16; display: flex; align-items: center; gap: 7px; font-size: 13px; letter-spacing: -.5px; }
.wicon { position: relative; height: 22px; }
.wicon b { position: absolute; left: 11px; top: -1px; width: 11px; height: 11px; border-radius: 50%; background: #d92d25; font: 8px/11px "Open Sans", sans-serif; text-align: center; }
.tray { display: grid; grid-template-columns: repeat(6, 22.500px); align-items: center; justify-items: center; }
.tray svg { width: 18px; height: 18px; fill: none; stroke: #eee; stroke-width: 1.200; }
.clock { display: flex; flex-direction: column; align-items: center; justify-content: center; line-height: 17px; padding-right: 6px; letter-spacing: -.75px; font-size: 12px; white-space: nowrap; }
.notif { border-right: 1px solid #73777a; width: 38px; padding: 11px 0 0 3px; position: relative; }
.notif b { position: absolute; left: 10px; top: 17px; width: 15px; height: 15px; border: 1px solid #a0a3a5; border-radius: 50%; background: #33383b; font: 9px/13px "Open Sans", sans-serif; text-align: center; }
```
